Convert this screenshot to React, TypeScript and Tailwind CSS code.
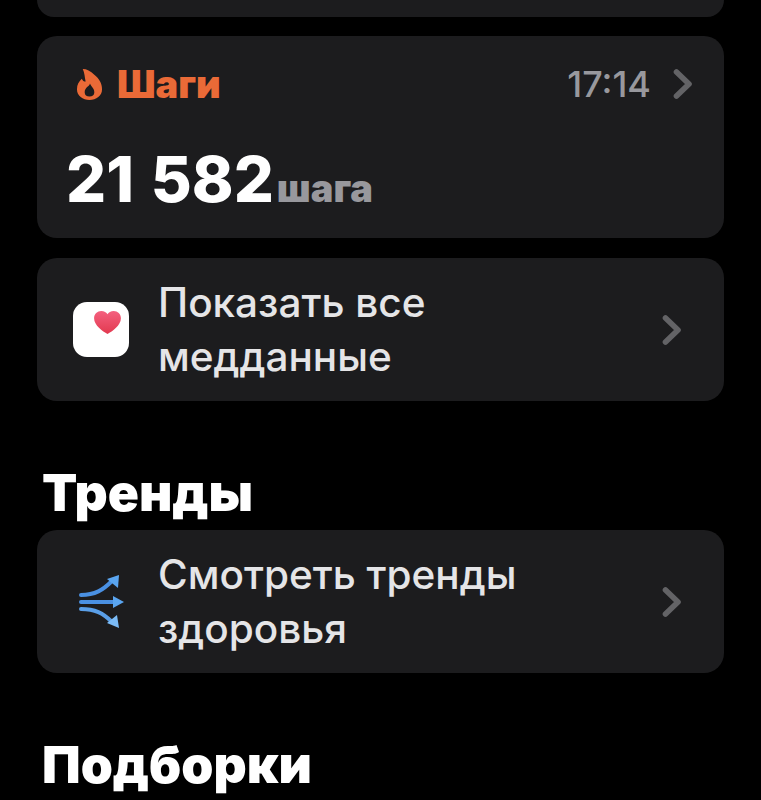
import React from "react";

const Chevron = ({ className }: { className: string }) => (
  <svg viewBox="0 0 20 32" className={className} fill="none" stroke="currentColor" strokeWidth="5.6" strokeLinecap="round" strokeLinejoin="round">
    <path d="M3.500 4 L16 16 L3.500 28" />
  </svg>
);

const Flame = () => (
  <svg viewBox="0 0 28 34" className="w-[27px] h-[33px] shrink-0 ml-[10px]">
    <path
      fillRule="evenodd"
      fill="#ea6a37"
      d="M7 1 C11 1 15 3 19 7 C24 11 27 16 27 22 C27 29 21 33 14 33 C7 33 1 29 1 22 C1 17 3 14 6 11 C7 13 8 14 10 14 C9 10 9 5 7 1 Z M14.500 16 C14 19 9 20 9 25 C9 28 11 29.500 14 29.500 C17 29.500 19 28 19 25 C19 21 15.500 19 14.500 16 Z"
    />
  </svg>
);

const Heart = () => (
  <svg viewBox="0 0 28 24" className="w-[27px] h-[23px]">
    <defs>
      <linearGradient id="h" x1="0" y1="0" x2="0" y2="1">
        <stop offset="0" stopColor="#f4607f" />
        <stop offset="1" stopColor="#e2394f" />
      </linearGradient>
    </defs>
    <path fill="url(#h)" d="M14 24 C9 21 0 15 0 7.500 C0 3 3.500 0 7.500 0 C10.500 0 13 1.500 14 3.500 C15 1.500 17.500 0 20.500 0 C24.500 0 28 3 28 7.500 C28 15 19 21 14 24 Z" />
  </svg>
);

const Trends = () => (
  <svg viewBox="0 0 46 54" className="w-[46px] h-[54px] ml-[6px]" fill="none" strokeLinecap="round">
    <path d="M2 20 C16 20 24 15 33 6" stroke="#4a90e2" strokeWidth="4" />
    <path d="M28 4 L40 0 L39 13 Z" fill="#5aa5f0" />
    <path d="M2 27 L36 27" stroke="#4a90e2" strokeWidth="4" />
    <path d="M34 21 L45 27 L34 33 Z" fill="#5aa5f0" />
    <path d="M2 34 C16 34 24 38 33 47" stroke="#5a9fe8" strokeWidth="4" />
    <path d="M28 48 L40 53 L38 40 Z" fill="#7cbcf7" />
  </svg>
);

const LinkRow = ({ icon, lines }: { icon: React.ReactNode; lines: [string, string] }) => (
  <div className="h-[143px] rounded-[20px] bg-[#1c1c1e] flex items-center pl-[36px] pr-[42px]">
    <div className="w-[85px] shrink-0 flex items-center">{icon}</div>
    <div className="flex-1 text-[40.5px] leading-[54px] font-medium text-[#e5e5e7] whitespace-nowrap">
      <div>{lines[0]}</div>
      <div>{lines[1]}</div>
    </div>
    <Chevron className="w-[20px] h-[32px] text-[#636366]" />
  </div>
);

export default function App() {
  return (
    <div className="w-[761px] h-[800px] overflow-hidden bg-black px-[37px] font-['Inter',sans-serif]">
      <div className="h-[17px] rounded-b-[20px] bg-[#1c1c1e]" />

      <div className="mt-[19px] h-[202px] rounded-[20px] bg-[#1c1c1e] pl-[29px] pr-[31px] pt-[30px]">
        <div className="flex items-center h-[36px]">
          <Flame />
          <span className="ml-[14px] text-[38px] leading-[36px] font-black text-[#ea6a37]">Шаги</span>
          <span className="ml-auto text-[36px] leading-[36px] font-medium text-[#98989d]">17:14</span>
          <Chevron className="ml-[22px] w-[20px] h-[32px] text-[#636366]" />
        </div>
        <div className="mt-[42px] flex items-baseline">
          <span className="text-[63px] leading-[70px] font-extrabold text-white [word-spacing:3px]">21 582</span>
          <span className="ml-[3px] text-[38px] leading-[70px] font-black text-[#98989d]">шага</span>
        </div>
      </div>

      <div className="mt-[20px]">
        <LinkRow
          icon={
            <div className="w-[56px] h-[55px] rounded-[14px] bg-white flex items-start justify-end pt-[9px] pr-[8px]">
              <Heart />
            </div>
          }
          lines={["Показать все", "медданные"]}
        />
      </div>

      <h2 className="mt-[64px] ml-[5px] text-[51.5px] leading-[54px] font-black text-white">Тренды</h2>

      <div className="mt-[11px]">
        <LinkRow icon={<Trends />} lines={["Смотреть тренды", "здоровья"]} />
      </div>

      <h2 className="mt-[64px] ml-[5px] text-[51.5px] leading-[54px] font-black text-white">Подборки</h2>
    </div>
  );
}
